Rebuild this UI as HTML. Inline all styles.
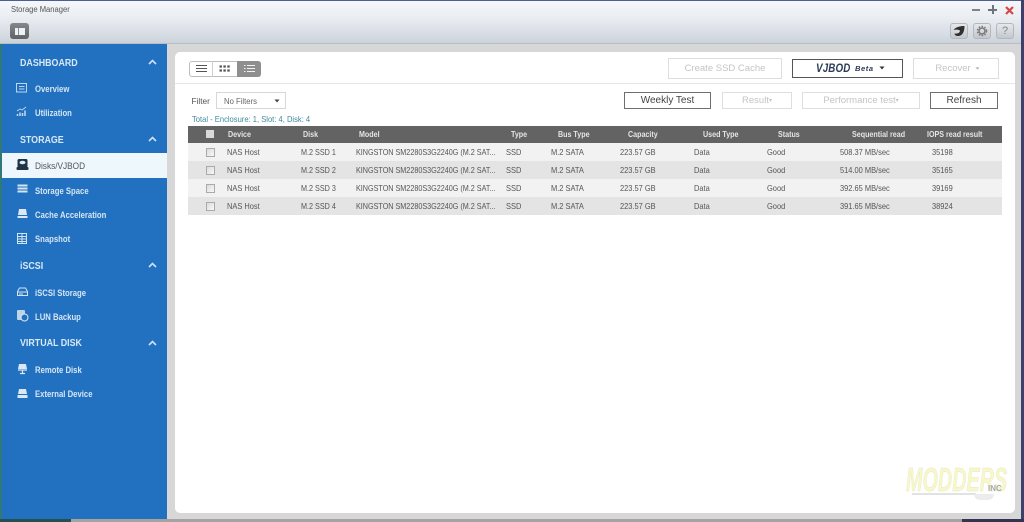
<!DOCTYPE html>
<html lang="en">
<head>
<meta charset="utf-8">
<title>Storage Manager</title>
<style>
html,body{margin:0;padding:0;background:#3a3a5e}
#w{position:relative;width:1024px;height:522px;overflow:hidden;background:#34344f;font-family:"Liberation Sans",sans-serif;filter:blur(.3px)}
#w div,#w svg.a{position:absolute}
.t{white-space:nowrap;line-height:12px;font-size:8.2px;color:#555;transform:scaleX(.91);transform-origin:0 0}
.m{transform:scaleX(.88)}
.h{white-space:nowrap;line-height:12px;font-size:8.2px;color:#e6e6e6;font-weight:bold;top:129px;transform:scaleX(.87);transform-origin:0 0}
.s{white-space:nowrap;line-height:14px;font-size:10.5px;font-weight:bold;color:#d8e8f6;left:20px;transform:scaleX(.845);transform-origin:0 0}
.n{white-space:nowrap;line-height:12px;font-size:9.2px;font-weight:bold;color:#d5e5f4;left:34.5px;transform:scaleX(.84);transform-origin:0 0}
.b{box-sizing:border-box;border:1px solid #dedede;background:#fff;text-align:center;color:#c4c4c4;white-space:nowrap;font-size:9.5px;line-height:17px}
.b span{font-size:6px;vertical-align:1px}
.d{box-sizing:border-box;border:1px solid #6e6e6e;background:#fff;text-align:center;color:#444;white-space:nowrap;font-size:10px;line-height:15px}
.c{box-sizing:border-box;width:9px;height:9px;left:205.5px;border:1px solid #aaa;background:linear-gradient(135deg,#ddd,#f7f7f7)}
.tb{box-sizing:border-box;width:18px;height:16px;top:23px;border:1px solid #b4b8bd;border-radius:3px;background:linear-gradient(#e6e8eb,#c4c8cd)}
</style>
</head>
<body>
<div id="w">
  <!-- window -->
  <div style="left:0;top:0;width:1021px;height:519px;background:#d7d7d7"></div>
  <div style="left:0;top:0;width:1024px;height:1.5px;background:#4a5f95"></div>
  <div style="left:0;top:1px;width:1021px;height:43px;background:linear-gradient(#f5f7f9,#e9edf1 40%,#cdd3db 97%,#aab0b7)"></div>
  <div style="left:1021px;top:0;width:3px;height:522px;background:#3f3f6b"></div>
  <div style="left:70px;top:519px;width:892px;height:3px;background:#a3a3a3"></div>
  <div style="left:0;top:519px;width:71px;height:3px;background:#24504f"></div>
  <div style="left:962px;top:519px;width:62px;height:3px;background:#34344f"></div>
  <div class="t" style="left:10.5px;top:3.5px;font-size:8px;color:#555;transform:scaleX(.95)">Storage Manager</div>

  <!-- toggle button -->
  <div style="left:10px;top:23px;width:19px;height:15.500px;border-radius:3px;background:linear-gradient(#85888b,#606366)"></div>
  <div style="left:14.500px;top:27.500px;width:10.500px;height:7px;background:#eef1f3"></div>
  <div style="left:18px;top:27.500px;width:1px;height:7px;background:#8a8d90"></div>

  <!-- window controls -->
  <div style="left:972px;top:9px;width:8px;height:2px;background:#808488"></div>
  <div style="left:988px;top:8.500px;width:9px;height:2px;background:#6b7580"></div>
  <div style="left:991.500px;top:5px;width:2px;height:9px;background:#6b7580"></div>
  <svg class="a" style="left:1004px;top:4.500px" width="11" height="11" viewBox="0 0 11 11"><path d="M2 2L9 9M9 2L2 9" stroke="#d8454a" stroke-width="2.200"/></svg>

  <div class="tb" style="left:950px"></div>
  <svg class="a" style="left:952px;top:25px" width="14" height="12" viewBox="0 0 14 12"><path d="M1.500 5C4 1.500 9 1 12.500 1C12.500 6 11 11 6 11C4 11 2.500 10 2.500 8.500C6 9 8 7.500 8 5.500C6 4.500 4 4.500 1.500 5Z" fill="#303030"/></svg>
  <div class="tb" style="left:973px"></div>
  <svg class="a" style="left:976px;top:25px" width="12" height="12" viewBox="0 0 12 12"><circle cx="6" cy="6" r="3" fill="none" stroke="#777" stroke-width="1.500"/><circle cx="6" cy="6" r="4.600" fill="none" stroke="#777" stroke-width="1.400" stroke-dasharray="1.600 1.400"/></svg>
  <div class="tb" style="left:996px"></div>
  <div class="t" style="left:996px;top:25px;width:18px;text-align:center;font-size:11px;color:#858585;transform:none">?</div>

  <!-- sidebar -->
  <div style="left:0;top:44px;width:2px;height:475px;background:#2f7a78"></div>
  <div style="left:2px;top:44px;width:165px;height:475px;background:#2271c1"></div>
  <div style="left:2px;top:153px;width:165px;height:25px;background:#edf7fc"></div>

  <div class="s" style="top:55.500px">DASHBOARD</div>
  <div class="s" style="top:133px">STORAGE</div>
  <div class="s" style="top:258.500px">iSCSI</div>
  <div class="s" style="top:336px">VIRTUAL DISK</div>

  <svg class="a" style="left:148px;top:59px" width="9" height="6" viewBox="0 0 9 6"><path d="M1 5L4.500 1.500L8 5" fill="none" stroke="#cfe2f3" stroke-width="1.600"/></svg>
  <svg class="a" style="left:148px;top:136px" width="9" height="6" viewBox="0 0 9 6"><path d="M1 5L4.500 1.500L8 5" fill="none" stroke="#cfe2f3" stroke-width="1.600"/></svg>
  <svg class="a" style="left:148px;top:262px" width="9" height="6" viewBox="0 0 9 6"><path d="M1 5L4.500 1.500L8 5" fill="none" stroke="#cfe2f3" stroke-width="1.600"/></svg>
  <svg class="a" style="left:148px;top:340px" width="9" height="6" viewBox="0 0 9 6"><path d="M1 5L4.500 1.500L8 5" fill="none" stroke="#cfe2f3" stroke-width="1.600"/></svg>

  <div class="n" style="top:83px">Overview</div>
  <div class="n" style="top:107px">Utilization</div>
  <div class="n" style="top:160px;color:#555;font-weight:normal;transform:scaleX(.9)">Disks/VJBOD</div>
  <div class="n" style="top:184.500px">Storage Space</div>
  <div class="n" style="top:209px">Cache Acceleration</div>
  <div class="n" style="top:233px">Snapshot</div>
  <div class="n" style="top:286.500px">iSCSI Storage</div>
  <div class="n" style="top:310.500px">LUN Backup</div>
  <div class="n" style="top:363.500px">Remote Disk</div>
  <div class="n" style="top:388px">External Device</div>

  <!-- sidebar icons -->
  <svg class="a" style="left:16px;top:82px" width="12" height="12" viewBox="0 0 12 12"><rect x=".5" y="1.500" width="10" height="8.500" fill="none" stroke="#bcd6ee"/><path d="M3 4.500H8.500M3 7H8.500" stroke="#bcd6ee"/></svg>
  <svg class="a" style="left:16px;top:106px" width="12" height="12" viewBox="0 0 12 12"><path d="M1.500 10V8M4 10V6.500M6.500 10V7M9 10V4.500" stroke="#c5dbef" stroke-width="1.500"/><path d="M1 5L4 3L6 4L10 1" fill="none" stroke="#c5dbef" stroke-width=".8"/></svg>
  <svg class="a" style="left:16px;top:158px" width="13" height="13" viewBox="0 0 13 13"><rect x="1.500" y="1" width="10" height="8.500" rx="1.500" fill="#1f3447"/><ellipse cx="6.500" cy="4.500" rx="3" ry="1.800" fill="#dfeaf2"/><rect x=".5" y="9" width="12" height="3" rx="1" fill="#1f3447"/></svg>
  <svg class="a" style="left:17px;top:184px" width="12" height="10" viewBox="0 0 12 10"><path d="M.5 1.500H10.500M.5 4.500H10.500M.5 7.500H10.500" stroke="#d3e4f3" stroke-width="2"/></svg>
  <svg class="a" style="left:17px;top:208px" width="12" height="11" viewBox="0 0 12 11"><path d="M2 1H9L10 7H1Z" fill="#dbe8f4"/><rect x="0.500" y="8" width="10" height="2" fill="#dbe8f4"/></svg>
  <svg class="a" style="left:17px;top:233px" width="11" height="12" viewBox="0 0 11 12"><rect x=".5" y=".5" width="9" height="10" fill="none" stroke="#d3e4f3"/><path d="M1 3.500H9M1 6H9M1 8.500H9M5 1V10" stroke="#d3e4f3" stroke-width="1"/></svg>
  <svg class="a" style="left:17px;top:287px" width="12" height="10" viewBox="0 0 12 10"><path d="M2.500 1H8.500L10.500 4.500V8.500H.5V4.500Z" fill="none" stroke="#d3e4f3"/><path d="M1 5H10M2 7H6" stroke="#d3e4f3"/></svg>
  <svg class="a" style="left:16px;top:309px" width="13" height="13" viewBox="0 0 13 13"><rect x="1" y="1" width="8" height="10" rx="1" fill="#bcd3e8"/><circle cx="8.500" cy="8.500" r="3.500" fill="#2271c1" stroke="#dbe8f4"/></svg>
  <svg class="a" style="left:17px;top:363px" width="12" height="12" viewBox="0 0 12 12"><path d="M2 1H9L10 6H1Z" fill="#dbe8f4"/><path d="M1 7H10M5.500 7V10M3 10.500H8" stroke="#dbe8f4" stroke-width="1.200"/></svg>
  <svg class="a" style="left:17px;top:388px" width="12" height="11" viewBox="0 0 12 11"><path d="M2 1H9L10 6H1Z" fill="#dbe8f4"/><rect x="0.500" y="7" width="10" height="3" fill="#dbe8f4"/></svg>

  <!-- content panel -->
  <div style="left:175px;top:52px;width:840px;height:461px;background:#fff;border-radius:5px"></div>
  <div style="left:175px;top:83px;width:840px;height:1px;background:#e6e6e6"></div>

  <!-- view switch -->
  <div style="box-sizing:border-box;left:189px;top:61px;width:72px;height:16px;border:1px solid #bdbdbd;border-radius:3px;background:#fff"></div>
  <div style="left:212px;top:61px;width:1px;height:16px;background:#cfcfcf"></div>
  <div style="left:237px;top:61px;width:24px;height:16px;background:#8f8f8f;border-radius:0 3px 3px 0"></div>
  <svg class="a" style="left:195px;top:64px" width="13" height="10" viewBox="0 0 13 10"><path d="M1 1.500H12M1 4.500H12M1 7.500H12" stroke="#555" stroke-width="1.100"/></svg>
  <svg class="a" style="left:219px;top:65px" width="12" height="8" viewBox="0 0 12 8"><path d="M.5 1.500H11M.5 5.500H11" stroke="#555" stroke-width="2.200" stroke-dasharray="2.400 1.500"/></svg>
  <svg class="a" style="left:243px;top:64px" width="13" height="10" viewBox="0 0 13 10"><path d="M1 1.500H2.500M1 4.500H2.500M1 7.500H2.500M4 1.500H12M4 4.500H12M4 7.500H12" stroke="#f2f2f2" stroke-width="1.100"/></svg>

  <!-- top buttons -->
  <div class="b" style="left:668px;top:58px;width:114px;height:21px;line-height:19px">Create SSD Cache</div>
  <div class="d" style="left:792px;top:59px;width:111px;height:19px;border-color:#555"></div>
  <div class="t" style="left:816px;top:62.500px;font-size:11.500px;font-weight:bold;font-style:italic;color:#2a3a55;letter-spacing:.2px;transform:scaleX(.85)">VJBOD</div>
  <div class="t" style="left:855px;top:63px;font-size:7.500px;font-weight:bold;font-style:italic;color:#2a3a55;letter-spacing:.6px;transform:none">Beta</div>
  <svg class="a" style="left:879px;top:66px" width="6" height="4" viewBox="0 0 6 4"><path d="M.5 .5H5.500L3 3.500Z" fill="#333"/></svg>
  <div class="b" style="left:913px;top:58px;width:86px;height:21px;line-height:19px;padding-right:6px">Recover</div>
  <svg class="a" style="left:975px;top:67px" width="5" height="3" viewBox="0 0 6 4"><path d="M.5 .5H5.500L3 3.500Z" fill="#aaa"/></svg>

  <!-- filter row -->
  <div class="t" style="left:191.500px;top:95px;font-size:8.300px;color:#555;transform:none">Filter</div>
  <div style="box-sizing:border-box;left:216px;top:92px;width:70px;height:17px;border:1px solid #d8d8d8;background:#fff"></div>
  <div class="t" style="left:224px;top:94.500px;font-size:8.300px;color:#666;transform:scaleX(.93)">No Filters</div>
  <svg class="a" style="left:273.500px;top:98.500px" width="6" height="4" viewBox="0 0 6 4"><path d="M.5 .5H5.500L3 3.500Z" fill="#444"/></svg>
  <div class="t" style="left:191.500px;top:112.500px;font-size:8.300px;color:#3f8a9c;transform:scaleX(.915)">Total - Enclosure: 1, Slot: 4, Disk: 4</div>

  <div class="d" style="left:624px;top:92px;width:87px;height:17px">Weekly Test</div>
  <div class="b" style="left:722px;top:92px;width:70px;height:17px;line-height:15px">Result<span>▾</span></div>
  <div class="b" style="left:802px;top:92px;width:118px;height:17px;line-height:15px">Performance test<span>▾</span></div>
  <div class="d" style="left:930px;top:92px;width:68px;height:17px">Refresh</div>

  <!-- table -->
  <div style="left:188px;top:126px;width:814px;height:17px;background:#636363"></div>
  <div style="left:188px;top:143px;width:814px;height:18px;background:#f2f2f2"></div>
  <div style="left:188px;top:161px;width:814px;height:18px;background:#e4e4e4"></div>
  <div style="left:188px;top:179px;width:814px;height:18px;background:#f2f2f2"></div>
  <div style="left:188px;top:197px;width:814px;height:18px;background:#e4e4e4"></div>

  <div style="left:206px;top:130px;width:8px;height:8px;background:#d9d9d9"></div>
  <div class="h" style="left:227.500px">Device</div>
  <div class="h" style="left:303px">Disk</div>
  <div class="h" style="left:358.500px">Model</div>
  <div class="h" style="left:511px">Type</div>
  <div class="h" style="left:558px">Bus Type</div>
  <div class="h" style="left:628px">Capacity</div>
  <div class="h" style="left:702.500px">Used Type</div>
  <div class="h" style="left:777.500px">Status</div>
  <div class="h" style="left:852px">Sequential read</div>
  <div class="h" style="left:926.500px">IOPS read result</div>

  <div class="c" style="top:147.500px"></div>
  <div class="t" style="left:227px;top:146.500px">NAS Host</div>
  <div class="t m" style="left:301px;top:146.500px">M.2 SSD 1</div>
  <div class="t m" style="left:356px;top:146.500px">KINGSTON SM2280S3G2240G (M.2 SAT...</div>
  <div class="t" style="left:505.500px;top:146.500px">SSD</div>
  <div class="t" style="left:551px;top:146.500px">M.2 SATA</div>
  <div class="t" style="left:620px;top:146.500px">223.57 GB</div>
  <div class="t" style="left:693.500px;top:146.500px">Data</div>
  <div class="t" style="left:766.500px;top:146.500px">Good</div>
  <div class="t" style="left:840px;top:146.500px">508.37 MB/sec</div>
  <div class="t" style="left:931.500px;top:146.500px">35198</div>

  <div class="c" style="top:165.500px"></div>
  <div class="t" style="left:227px;top:164.500px">NAS Host</div>
  <div class="t m" style="left:301px;top:164.500px">M.2 SSD 2</div>
  <div class="t m" style="left:356px;top:164.500px">KINGSTON SM2280S3G2240G (M.2 SAT...</div>
  <div class="t" style="left:505.500px;top:164.500px">SSD</div>
  <div class="t" style="left:551px;top:164.500px">M.2 SATA</div>
  <div class="t" style="left:620px;top:164.500px">223.57 GB</div>
  <div class="t" style="left:693.500px;top:164.500px">Data</div>
  <div class="t" style="left:766.500px;top:164.500px">Good</div>
  <div class="t" style="left:840px;top:164.500px">514.00 MB/sec</div>
  <div class="t" style="left:931.500px;top:164.500px">35165</div>

  <div class="c" style="top:183.500px"></div>
  <div class="t" style="left:227px;top:182.500px">NAS Host</div>
  <div class="t m" style="left:301px;top:182.500px">M.2 SSD 3</div>
  <div class="t m" style="left:356px;top:182.500px">KINGSTON SM2280S3G2240G (M.2 SAT...</div>
  <div class="t" style="left:505.500px;top:182.500px">SSD</div>
  <div class="t" style="left:551px;top:182.500px">M.2 SATA</div>
  <div class="t" style="left:620px;top:182.500px">223.57 GB</div>
  <div class="t" style="left:693.500px;top:182.500px">Data</div>
  <div class="t" style="left:766.500px;top:182.500px">Good</div>
  <div class="t" style="left:840px;top:182.500px">392.65 MB/sec</div>
  <div class="t" style="left:931.500px;top:182.500px">39169</div>

  <div class="c" style="top:201.500px"></div>
  <div class="t" style="left:227px;top:200.500px">NAS Host</div>
  <div class="t m" style="left:301px;top:200.500px">M.2 SSD 4</div>
  <div class="t m" style="left:356px;top:200.500px">KINGSTON SM2280S3G2240G (M.2 SAT...</div>
  <div class="t" style="left:505.500px;top:200.500px">SSD</div>
  <div class="t" style="left:551px;top:200.500px">M.2 SATA</div>
  <div class="t" style="left:620px;top:200.500px">223.57 GB</div>
  <div class="t" style="left:693.500px;top:200.500px">Data</div>
  <div class="t" style="left:766.500px;top:200.500px">Good</div>
  <div class="t" style="left:840px;top:200.500px">391.65 MB/sec</div>
  <div class="t" style="left:931.500px;top:200.500px">38924</div>

  <!-- watermark -->
  <div style="left:906px;top:463px;white-space:nowrap;font-size:33px;line-height:34px;font-weight:bold;font-style:italic;color:#f8f7c8;transform:scaleX(.6);transform-origin:0 0;-webkit-text-stroke:.5px #e6e6d0">MODDERS</div>
  <div style="left:988px;top:484px;white-space:nowrap;font-size:8px;line-height:10px;font-weight:bold;color:#a8a8a8">INC</div>
  <div style="left:912px;top:493px;width:64px;height:2px;background:#e2e2e2"></div>
  <div style="left:974px;top:494px;width:20px;height:6px;border-radius:0 0 12px 12px;background:#ececec"></div>
</div>
</body>
</html>
